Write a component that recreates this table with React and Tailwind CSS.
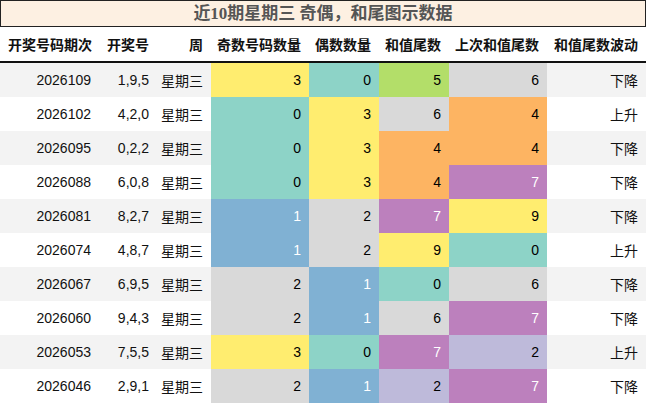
const widths = ['w-[99px]', 'w-[58px]', 'w-[54px]', 'w-[98px]', 'w-[70px]', 'w-[70px]', 'w-[98px]', 'w-[99px]'];

const headers = ['开奖号码期次', '开奖号', '周', '奇数号码数量', '偶数数量', '和值尾数', '上次和值尾数', '和值尾数波动'];

// colour per value, ColorBrewer Set3 style
const C = {
  yellow: 'bg-[#ffed6f] text-black',
  teal: 'bg-[#8dd3c7] text-black',
  green: 'bg-[#b3de69] text-black',
  gray: 'bg-[#d9d9d9] text-black',
  orange: 'bg-[#fdb462] text-black',
  purple: 'bg-[#bc80bd] text-white',
  blue: 'bg-[#80b1d3] text-white',
  lav: 'bg-[#bebada] text-black',
};

const rows = [
  ['2026109', '1,9,5', [3, 'yellow'], [0, 'teal'], [5, 'green'], [6, 'gray'], '下降'],
  ['2026102', '4,2,0', [0, 'teal'], [3, 'yellow'], [6, 'gray'], [4, 'orange'], '上升'],
  ['2026095', '0,2,2', [0, 'teal'], [3, 'yellow'], [4, 'orange'], [4, 'orange'], '下降'],
  ['2026088', '6,0,8', [0, 'teal'], [3, 'yellow'], [4, 'orange'], [7, 'purple'], '下降'],
  ['2026081', '8,2,7', [1, 'blue'], [2, 'gray'], [7, 'purple'], [9, 'yellow'], '下降'],
  ['2026074', '4,8,7', [1, 'blue'], [2, 'gray'], [9, 'yellow'], [0, 'teal'], '上升'],
  ['2026067', '6,9,5', [2, 'gray'], [1, 'blue'], [0, 'teal'], [6, 'gray'], '下降'],
  ['2026060', '9,4,3', [2, 'gray'], [1, 'blue'], [6, 'gray'], [7, 'purple'], '下降'],
  ['2026053', '7,5,5', [3, 'yellow'], [0, 'teal'], [7, 'purple'], [2, 'lav'], '上升'],
  ['2026046', '2,9,1', [2, 'gray'], [1, 'blue'], [2, 'lav'], [7, 'purple'], '下降'],
];

export default function App() {
  return (
    <div className="w-[646px] h-[404px] bg-white overflow-hidden text-[14px] text-[#111] font-['Liberation_Sans','Noto_Sans_CJK_SC',sans-serif]">
      <div className="h-[27px] border border-[#222] bg-[#fdf0e2] flex items-center justify-center font-bold text-[17px] text-[#555] font-['Liberation_Serif','Noto_Sans_CJK_SC',serif]">
        近10期星期三 奇偶，和尾图示数据
      </div>
      <div className="flex h-[36px] border-b-2 border-[#111] font-bold">
        {headers.map((h, i) => (
          <div key={h} className={`${widths[i]} ${i === 0 ? 'justify-start pl-2' : 'justify-end pr-2'} flex items-center shrink-0 font-['Noto_Sans_CJK_SC',sans-serif]`}>
            {h}
          </div>
        ))}
      </div>
      {rows.map((r, idx) => (
        <div key={r[0]} className={`flex h-[34px] ${idx % 2 === 0 ? 'bg-[#f3f3f3]' : 'bg-white'}`}>
          <div className={`${widths[0]} shrink-0 flex items-center justify-end pr-2`}>{r[0]}</div>
          <div className={`${widths[1]} shrink-0 flex items-center justify-end pr-2`}>{r[1]}</div>
          <div className={`${widths[2]} shrink-0 flex items-center justify-end pr-2 font-['Noto_Sans_CJK_SC',sans-serif]`}>星期三</div>
          {[r[2], r[3], r[4], r[5]].map((c, j) => (
            <div key={j} className={`${widths[j + 3]} ${C[c[1]]} shrink-0 flex items-center justify-end pr-2`}>{c[0]}</div>
          ))}
          <div className={`${widths[7]} shrink-0 flex items-center justify-end pr-2 font-['Noto_Sans_CJK_SC',sans-serif]`}>{r[6]}</div>
        </div>
      ))}
    </div>
  );
}
